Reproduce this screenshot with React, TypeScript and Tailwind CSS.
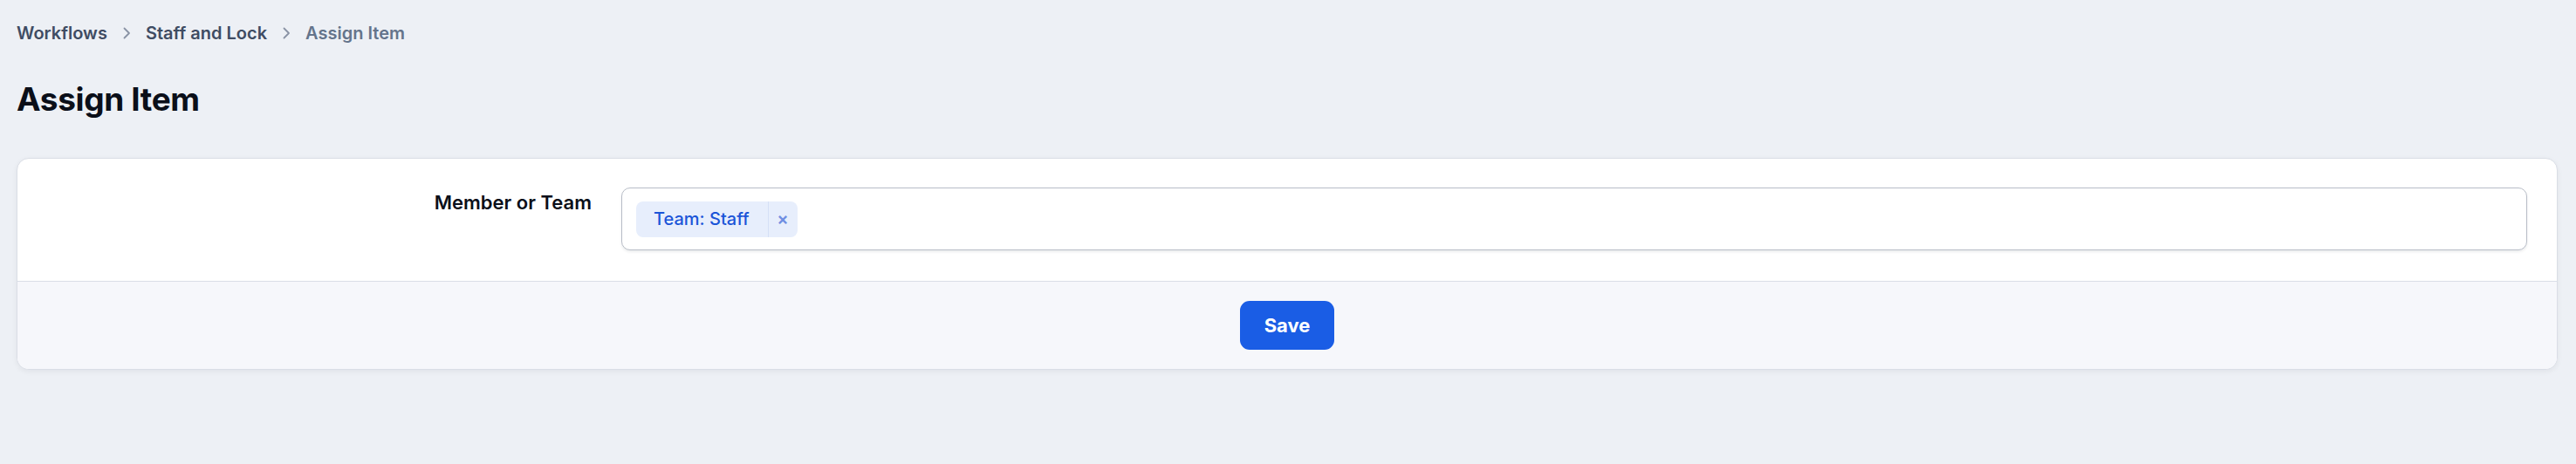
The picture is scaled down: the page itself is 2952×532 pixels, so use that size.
const FONT = "font-['Inter','Noto_Sans',sans-serif]";

function Chevron() {
  return (
    <svg width="10" height="14" viewBox="0 0 10 14" fill="none" className="mx-[17px]">
      <path d="M2.5 1.5 L8 7 L2.5 12.5" stroke="#8a93a5" strokeWidth="1.8" strokeLinecap="round" strokeLinejoin="round" />
    </svg>
  );
}

export default function App() {
  return (
    <div className={`${FONT} min-h-[532px] w-full bg-[#edf0f5] px-[19px] pr-[21px] pt-[24px] antialiased`}>
      {/* breadcrumb */}
      <nav className="flex items-center text-[20px] font-semibold leading-[28px]">
        <span className="text-[#3f4c63]">Workflows</span>
        <Chevron />
        <span className="text-[#3f4c63]">Staff and Lock</span>
        <Chevron />
        <span className="text-[#64748b]">Assign Item</span>
      </nav>

      {/* title */}
      <h1 className="mt-[38px] text-[37px] font-bold leading-[48px] tracking-[-0.01em] text-[#0b0f19]">Assign Item</h1>

      {/* card */}
      <div className="mt-[43px] overflow-hidden rounded-[14px] border border-[#dadee6] bg-white shadow-[0_2px_6px_rgba(15,23,42,0.06)]">
        <div className="flex items-start pb-[35px] pr-[34px] pt-[33px]">
          <label className="w-[658px] pt-[1px] text-right text-[22px] font-semibold leading-[32px] text-[#0b0f19]">
            Member or Team
          </label>
          <div className="ml-[34px] flex h-[72px] flex-1 items-center rounded-[10px] border border-[#b8bdc7] bg-white px-[16px] shadow-[0_2px_3px_rgba(15,23,42,0.08)]">
            <span className="flex h-[41px] items-stretch overflow-hidden rounded-[8px] bg-[#e7eefc]">
              <span className="flex items-center pl-[20px] pr-[21px] text-[20px] font-medium text-[#1b55d8]">Team: Staff</span>
              <span className="flex w-[34px] items-center justify-center border-l border-[#d5e0f6] text-[20px] font-semibold text-[#6f8fe2]">×</span>
            </span>
          </div>
        </div>
        <div className="flex justify-center border-t border-[#dadee6] bg-[#f6f7fb] py-[22px]">
          <button className="h-[56px] w-[108px] rounded-[11px] bg-[#1a5de5] text-[22px] font-bold text-white">Save</button>
        </div>
      </div>
    </div>
  );
}
